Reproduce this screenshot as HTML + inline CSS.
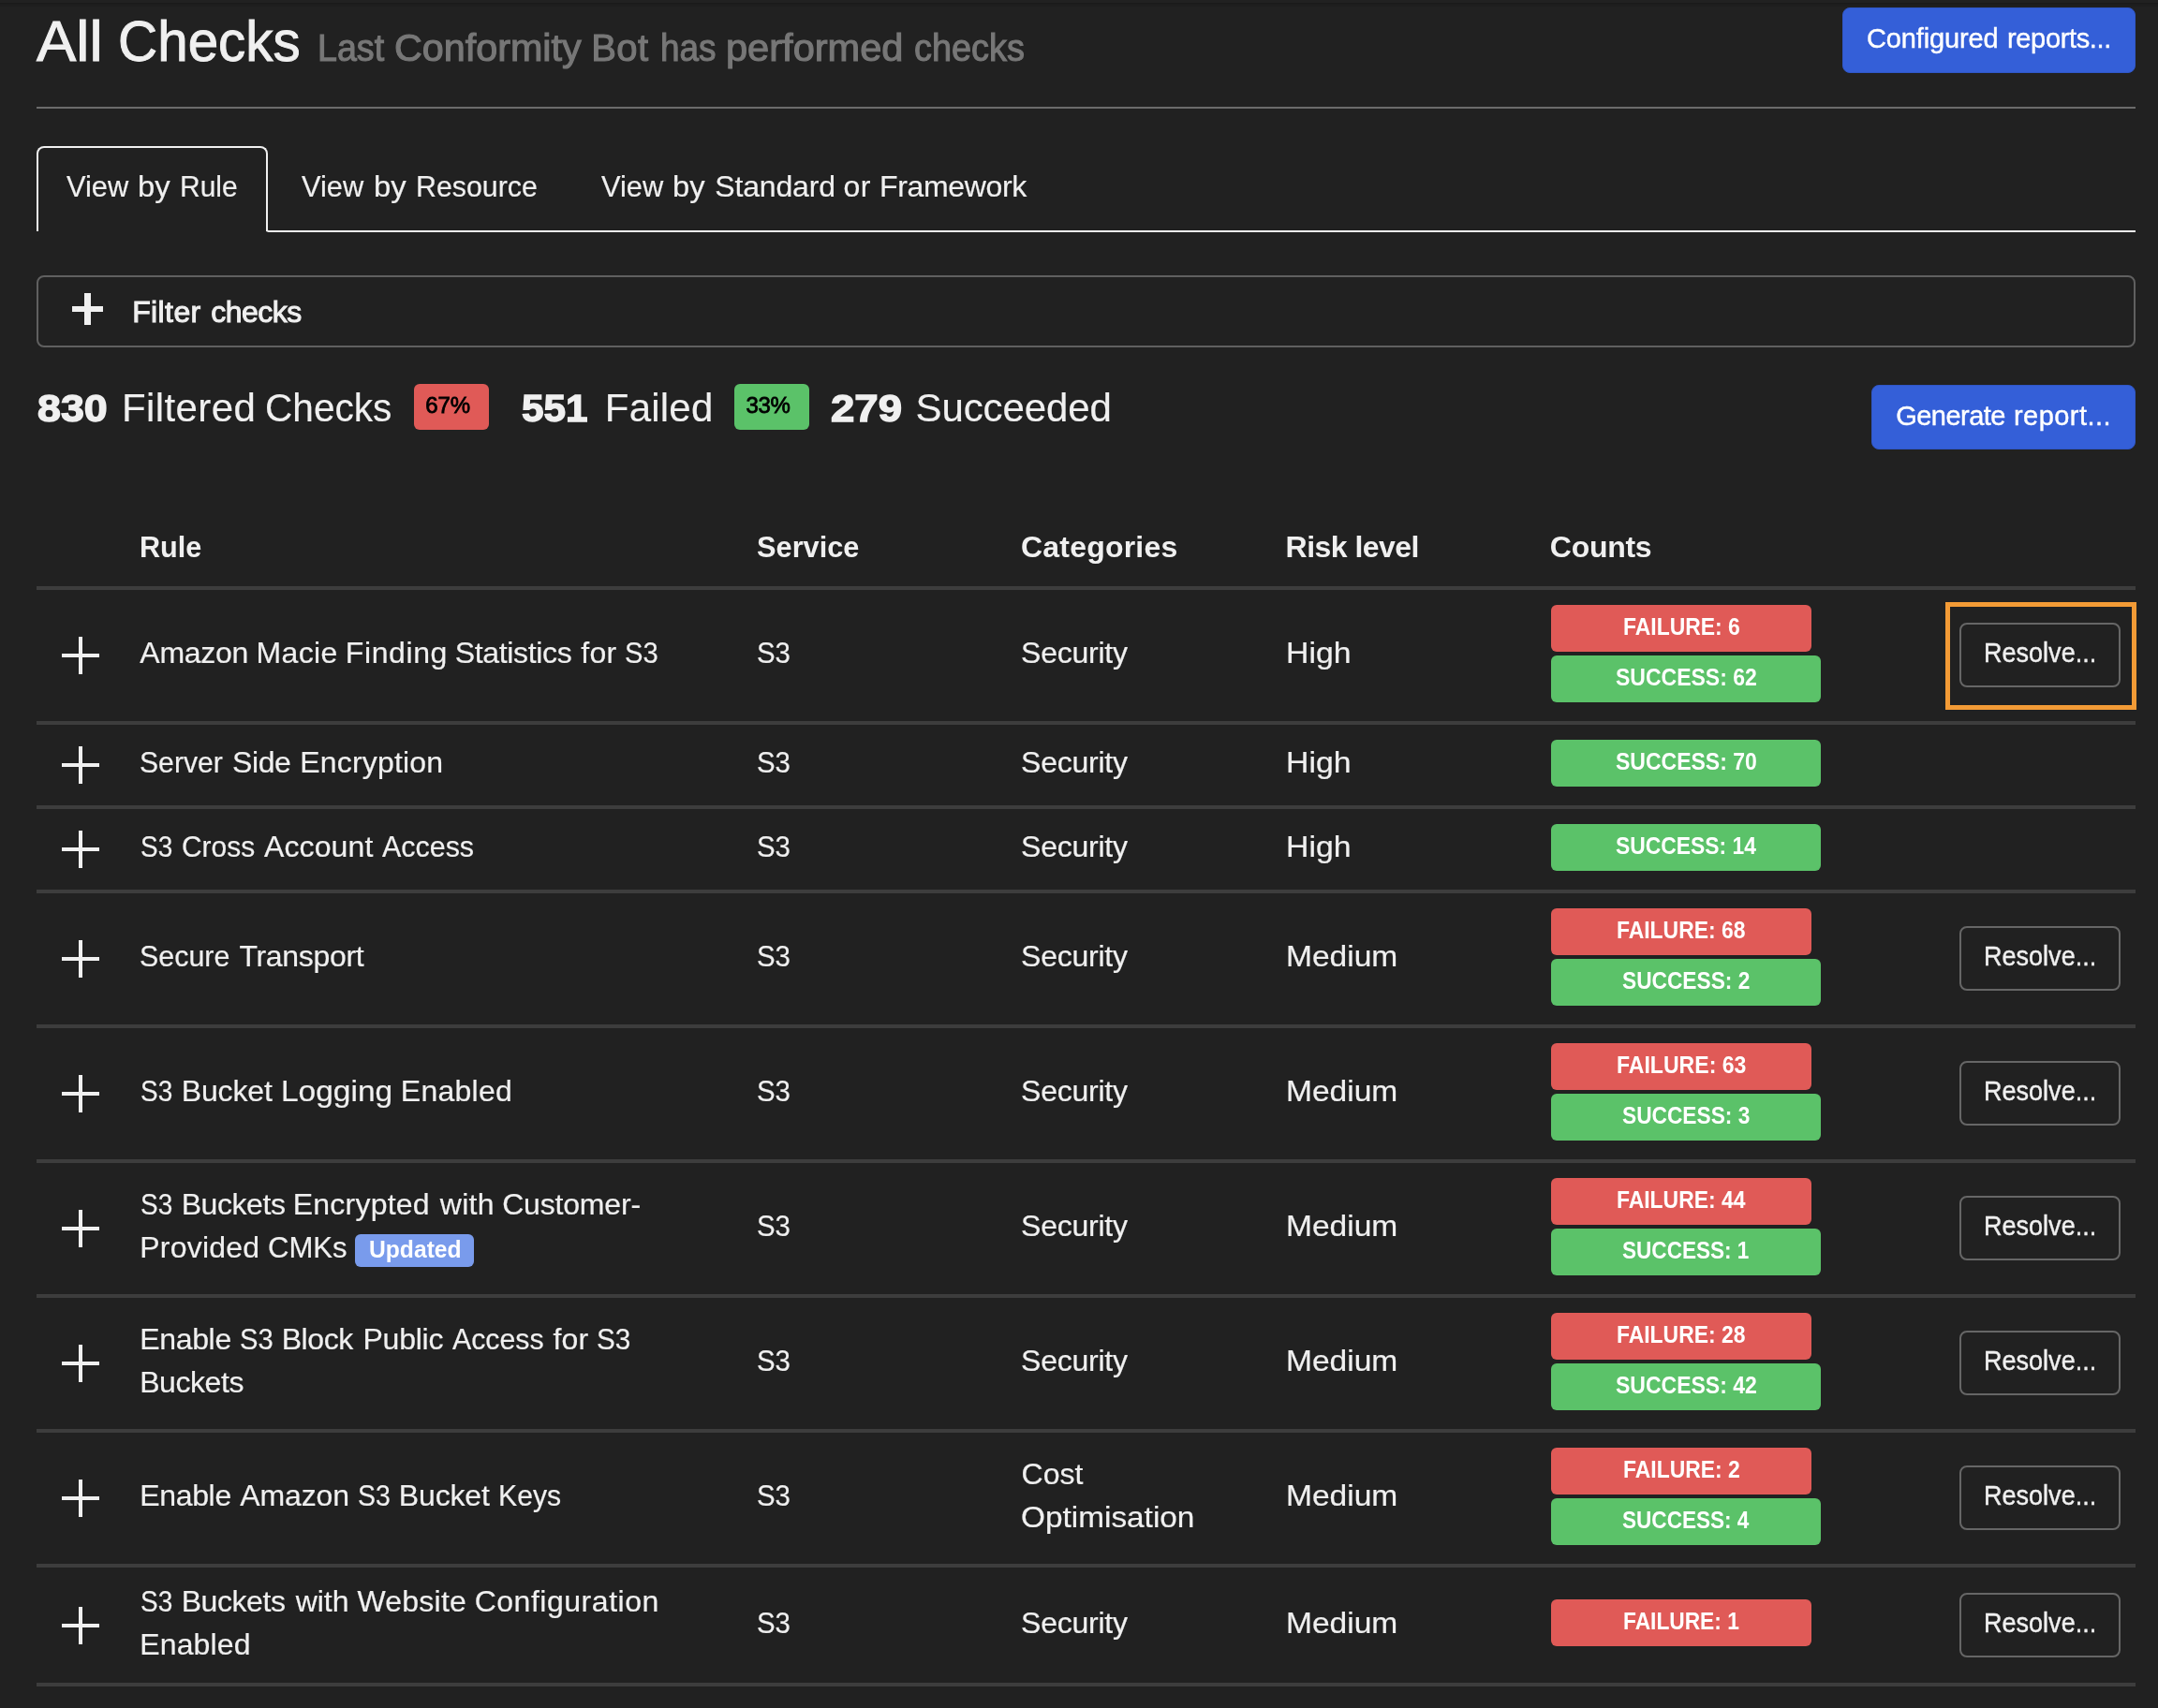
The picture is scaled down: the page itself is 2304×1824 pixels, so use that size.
<!DOCTYPE html>
<html><head><meta charset="utf-8"><title>All Checks</title>
<style>
html,body{margin:0;padding:0;background:#212121;}
body{width:2304px;height:1824px;position:relative;overflow:hidden;font-family:"Liberation Sans",sans-serif;}
#root{position:absolute;left:0;top:0;width:2304px;height:1824px;transform:translateZ(0);will-change:transform;}
#s>div{position:absolute;}
.t{position:absolute;white-space:nowrap;line-height:1;}
.t>span{display:inline-block;transform-origin:0 0;}
.btn{background:#345fd8;border-radius:8px;box-sizing:border-box;border:1px solid #3057c8;}
</style></head><body>
<div id="root">
<div id="s">
<div style="left:0;top:3px;width:2304px;height:1px;background:#1a1a1a"></div>
<div style="left:0;top:4px;width:2304px;height:1px;background:#1c1c1c"></div>
<div style="left:0;top:5px;width:2304px;height:1px;background:#1e1e1e"></div>
<div style="left:0;top:6px;width:2304px;height:1px;background:#1f1f1f"></div>
<div style="left:0;top:7px;width:2304px;height:1px;background:#202020"></div>
<div class="btn" style="left:1967px;top:8px;width:313px;height:70px"></div>
<div style="left:39px;top:114px;width:2241px;height:2px;background:#6b6b6b"></div>
<div style="left:284px;top:236px;width:1996px;height:12px;box-sizing:border-box;border-left:2px solid #f0f0f0;border-bottom:2px solid #f0f0f0;border-bottom-left-radius:3px"></div>
<div style="left:39px;top:156px;width:247px;height:91px;box-sizing:border-box;border:2px solid #f0f0f0;border-bottom:none;border-radius:8px 8px 0 0"></div>
<div style="left:39px;top:294px;width:2241px;height:77px;box-sizing:border-box;border:2px solid #606060;border-radius:8px"></div>
<div style="left:77px;top:326.5px;width:33px;height:6.5px;background:#f0f0f0"></div>
<div style="left:90px;top:313px;width:6.5px;height:33.5px;background:#f0f0f0"></div>
<div style="left:442px;top:410px;width:80px;height:49px;background:#e05a57;border-radius:6px"></div>
<div style="left:784px;top:410px;width:80px;height:49px;background:#5bc269;border-radius:6px"></div>
<div class="btn" style="left:1998px;top:411px;width:282px;height:69px"></div>
<div style="left:39px;top:626px;width:2241px;height:4px;background:#3d3d3d"></div>
<div style="left:39px;top:770px;width:2241px;height:4px;background:#3d3d3d"></div>
<div style="left:66px;top:698.0px;width:40px;height:4px;background:#f0f0f0"></div>
<div style="left:84px;top:680.0px;width:4px;height:40px;background:#f0f0f0"></div>
<div style="left:1656px;top:646px;width:278px;height:50px;background:#e05a57;border-radius:6px"></div>
<div style="left:1656px;top:700px;width:288px;height:50px;background:#5bc269;border-radius:6px"></div>
<div style="left:2092px;top:665px;width:172px;height:69px;box-sizing:border-box;border:2px solid #666;border-radius:8px"></div>
<div style="left:39px;top:860px;width:2241px;height:4px;background:#3d3d3d"></div>
<div style="left:66px;top:815.0px;width:40px;height:4px;background:#f0f0f0"></div>
<div style="left:84px;top:797.0px;width:4px;height:40px;background:#f0f0f0"></div>
<div style="left:1656px;top:790px;width:288px;height:50px;background:#5bc269;border-radius:6px"></div>
<div style="left:39px;top:950px;width:2241px;height:4px;background:#3d3d3d"></div>
<div style="left:66px;top:905.0px;width:40px;height:4px;background:#f0f0f0"></div>
<div style="left:84px;top:887.0px;width:4px;height:40px;background:#f0f0f0"></div>
<div style="left:1656px;top:880px;width:288px;height:50px;background:#5bc269;border-radius:6px"></div>
<div style="left:39px;top:1094px;width:2241px;height:4px;background:#3d3d3d"></div>
<div style="left:66px;top:1022.0px;width:40px;height:4px;background:#f0f0f0"></div>
<div style="left:84px;top:1004.0px;width:4px;height:40px;background:#f0f0f0"></div>
<div style="left:1656px;top:970px;width:278px;height:50px;background:#e05a57;border-radius:6px"></div>
<div style="left:1656px;top:1024px;width:288px;height:50px;background:#5bc269;border-radius:6px"></div>
<div style="left:2092px;top:989px;width:172px;height:69px;box-sizing:border-box;border:2px solid #666;border-radius:8px"></div>
<div style="left:39px;top:1238px;width:2241px;height:4px;background:#3d3d3d"></div>
<div style="left:66px;top:1166.0px;width:40px;height:4px;background:#f0f0f0"></div>
<div style="left:84px;top:1148.0px;width:4px;height:40px;background:#f0f0f0"></div>
<div style="left:1656px;top:1114px;width:278px;height:50px;background:#e05a57;border-radius:6px"></div>
<div style="left:1656px;top:1168px;width:288px;height:50px;background:#5bc269;border-radius:6px"></div>
<div style="left:2092px;top:1133px;width:172px;height:69px;box-sizing:border-box;border:2px solid #666;border-radius:8px"></div>
<div style="left:39px;top:1382px;width:2241px;height:4px;background:#3d3d3d"></div>
<div style="left:66px;top:1310.0px;width:40px;height:4px;background:#f0f0f0"></div>
<div style="left:84px;top:1292.0px;width:4px;height:40px;background:#f0f0f0"></div>
<div style="left:1656px;top:1258px;width:278px;height:50px;background:#e05a57;border-radius:6px"></div>
<div style="left:1656px;top:1312px;width:288px;height:50px;background:#5bc269;border-radius:6px"></div>
<div style="left:2092px;top:1277px;width:172px;height:69px;box-sizing:border-box;border:2px solid #666;border-radius:8px"></div>
<div style="left:39px;top:1526px;width:2241px;height:4px;background:#3d3d3d"></div>
<div style="left:66px;top:1454.0px;width:40px;height:4px;background:#f0f0f0"></div>
<div style="left:84px;top:1436.0px;width:4px;height:40px;background:#f0f0f0"></div>
<div style="left:1656px;top:1402px;width:278px;height:50px;background:#e05a57;border-radius:6px"></div>
<div style="left:1656px;top:1456px;width:288px;height:50px;background:#5bc269;border-radius:6px"></div>
<div style="left:2092px;top:1421px;width:172px;height:69px;box-sizing:border-box;border:2px solid #666;border-radius:8px"></div>
<div style="left:39px;top:1670px;width:2241px;height:4px;background:#3d3d3d"></div>
<div style="left:66px;top:1598.0px;width:40px;height:4px;background:#f0f0f0"></div>
<div style="left:84px;top:1580.0px;width:4px;height:40px;background:#f0f0f0"></div>
<div style="left:1656px;top:1546px;width:278px;height:50px;background:#e05a57;border-radius:6px"></div>
<div style="left:1656px;top:1600px;width:288px;height:50px;background:#5bc269;border-radius:6px"></div>
<div style="left:2092px;top:1565px;width:172px;height:69px;box-sizing:border-box;border:2px solid #666;border-radius:8px"></div>
<div style="left:39px;top:1797px;width:2241px;height:4px;background:#3d3d3d"></div>
<div style="left:66px;top:1733.5px;width:40px;height:4px;background:#f0f0f0"></div>
<div style="left:84px;top:1715.5px;width:4px;height:40px;background:#f0f0f0"></div>
<div style="left:1656px;top:1708px;width:278px;height:50px;background:#e05a57;border-radius:6px"></div>
<div style="left:2092px;top:1701px;width:172px;height:69px;box-sizing:border-box;border:2px solid #666;border-radius:8px"></div>
<div style="left:379px;top:1318px;width:127px;height:35px;background:#799bec;border-radius:6px"></div>
<div style="left:2077px;top:643px;width:204px;height:115px;box-sizing:border-box;border:5px solid #f39b36"></div>
</div>
<div class="t" style="left:39.41px;top:12.72px;font-size:62px;color:#f0f0f0;-webkit-text-stroke:1.0px #f0f0f0;"><span style="transform:scaleX(1.0238);">All</span> <span style="margin-left:0.91px;transform:scaleX(0.9416);">Checks</span></div>
<div class="t" style="left:338.70px;top:31.44px;font-size:40px;color:#777777;-webkit-text-stroke:1.1px #777777;"><span style="transform:scaleX(0.9403);">Last</span> <span style="margin-left:-4.61px;transform:scaleX(1.0323);">Conformity</span> <span style="margin-left:5.85px;letter-spacing:0.437px;">Bot</span> <span style="margin-left:0.85px;transform:scaleX(0.9218);">has</span> <span style="margin-left:-4.78px;transform:scaleX(1.0393);">performed</span> <span style="margin-left:7.16px;transform:scaleX(0.9467);">checks</span></div>
<div class="t" style="left:1993.00px;top:27.05px;font-size:29px;color:#ffffff;-webkit-text-stroke:0.4px #ffffff;"><span style="letter-spacing:-0.127px;">Configured</span> <span style="margin-left:1.34px;letter-spacing:-0.341px;">reports...</span></div>
<div class="t" style="left:70.70px;top:182.91px;font-size:32px;color:#f0f0f0;-webkit-text-stroke:0.2px #f0f0f0;"><span style="transform:scaleX(0.9618);">View</span> <span style="margin-left:-1.32px;transform:scaleX(1.0251);">by</span> <span style="margin-left:2.48px;transform:scaleX(0.9365);">Rule</span></div>
<div class="t" style="left:322.30px;top:182.91px;font-size:32px;color:#f0f0f0;-webkit-text-stroke:0.2px #f0f0f0;"><span style="transform:scaleX(0.9618);">View</span> <span style="margin-left:-1.32px;transform:scaleX(1.0251);">by</span> <span style="margin-left:2.46px;transform:scaleX(0.9475);">Resource</span></div>
<div class="t" style="left:642.10px;top:182.91px;font-size:32px;color:#f0f0f0;-webkit-text-stroke:0.2px #f0f0f0;"><span style="transform:scaleX(0.9618);">View</span> <span style="margin-left:-1.61px;transform:scaleX(1.0220);">by</span> <span style="margin-left:2.35px;letter-spacing:-0.140px;">Standard</span> <span style="margin-left:-0.25px;letter-spacing:0.303px;">or</span> <span style="margin-left:0.45px;letter-spacing:-0.352px;">Framework</span></div>
<div class="t" style="left:141.20px;top:316.81px;font-size:32px;color:#f0f0f0;-webkit-text-stroke:1.0px #f0f0f0;"><span style="letter-spacing:0.389px;">Filter</span> <span style="margin-left:1.66px;letter-spacing:-0.519px;">checks</span></div>
<div class="t" style="left:40.27px;top:415.89px;font-size:41px;color:#f0f0f0;font-weight:700;-webkit-text-stroke:1.4px #f0f0f0;"><span style="transform:scaleX(1.0911);">830</span></div>
<div class="t" style="left:129.97px;top:415.45px;font-size:42px;color:#f0f0f0;-webkit-text-stroke:0.15px #f0f0f0;"><span style="letter-spacing:0.394px;">Filtered</span> <span style="margin-left:-1.51px;transform:scaleX(0.9665);">Checks</span></div>
<div class="t" style="left:454.20px;top:420.68px;font-size:24px;color:#000;-webkit-text-stroke:0.8px #000;"><span style="letter-spacing:-0.098px;">67%</span></div>
<div class="t" style="left:556.59px;top:415.89px;font-size:41px;color:#f0f0f0;font-weight:700;-webkit-text-stroke:1.4px #f0f0f0;"><span style="transform:scaleX(1.0293);">551</span></div>
<div class="t" style="left:645.78px;top:415.45px;font-size:42px;color:#f0f0f0;-webkit-text-stroke:0.15px #f0f0f0;"><span style="letter-spacing:0.223px;">Failed</span></div>
<div class="t" style="left:796.60px;top:420.68px;font-size:24px;color:#000;-webkit-text-stroke:0.8px #000;"><span style="letter-spacing:-0.398px;">33%</span></div>
<div class="t" style="left:887.37px;top:415.89px;font-size:41px;color:#f0f0f0;font-weight:700;-webkit-text-stroke:1.4px #f0f0f0;"><span style="transform:scaleX(1.1117);">279</span></div>
<div class="t" style="left:977.58px;top:415.45px;font-size:42px;color:#f0f0f0;-webkit-text-stroke:0.15px #f0f0f0;"><span style="letter-spacing:-0.119px;">Succeeded</span></div>
<div class="t" style="left:2024.20px;top:429.65px;font-size:29px;color:#ffffff;-webkit-text-stroke:0.4px #ffffff;"><span style="letter-spacing:-0.526px;">Generate</span> <span style="margin-left:1.04px;letter-spacing:0.441px;">report...</span></div>
<div class="t" style="left:149.09px;top:568.11px;font-size:32px;color:#f0f0f0;font-weight:700;"><span style="transform:scaleX(0.9572);">Rule</span></div>
<div class="t" style="left:808.40px;top:568.11px;font-size:32px;color:#f0f0f0;font-weight:700;"><span style="transform:scaleX(0.9613);">Service</span></div>
<div class="t" style="left:1090.00px;top:568.11px;font-size:32px;color:#f0f0f0;font-weight:700;"><span style="letter-spacing:0.201px;">Categories</span></div>
<div class="t" style="left:1372.60px;top:568.11px;font-size:32px;color:#f0f0f0;font-weight:700;"><span style="letter-spacing:-0.530px;">Risk level</span></div>
<div class="t" style="left:1654.80px;top:568.11px;font-size:32px;color:#f0f0f0;font-weight:700;"><span style="letter-spacing:-0.281px;">Counts</span></div>
<div class="t" style="left:149.30px;top:681.41px;font-size:32px;color:#f0f0f0;-webkit-text-stroke:0.2px #f0f0f0;"><span style="letter-spacing:-0.259px;">Amazon</span> <span style="margin-left:-0.53px;letter-spacing:0.359px;">Macie</span> <span style="margin-left:-0.75px;letter-spacing:0.591px;">Finding</span> <span style="margin-left:-0.98px;letter-spacing:-0.348px;">Statistics</span> <span style="margin-left:0.96px;letter-spacing:0.256px;">for</span> <span style="margin-left:-0.62px;transform:scaleX(0.9109);">S3</span></div>
<div class="t" style="left:807.57px;top:681.41px;font-size:32px;color:#f0f0f0;-webkit-text-stroke:0.2px #f0f0f0;"><span style="transform:scaleX(0.9189);">S3</span></div>
<div class="t" style="left:1090.10px;top:681.41px;font-size:32px;color:#f0f0f0;-webkit-text-stroke:0.2px #f0f0f0;"><span style="letter-spacing:-0.256px;">Security</span></div>
<div class="t" style="left:1372.59px;top:681.41px;font-size:32px;color:#f0f0f0;-webkit-text-stroke:0.2px #f0f0f0;"><span style="transform:scaleX(1.0560);">High</span></div>
<div class="t" style="left:1732.88px;top:657.04px;font-size:25px;color:#fff;font-weight:700;"><span style="transform:scaleX(0.9164);">FAILURE: 6</span></div>
<div class="t" style="left:1725.00px;top:711.04px;font-size:25px;color:#fff;font-weight:700;"><span style="transform:scaleX(0.9200);">SUCCESS: 62</span></div>
<div class="t" style="left:2117.82px;top:682.95px;font-size:29px;color:#f0f0f0;-webkit-text-stroke:0.4px #f0f0f0;"><span style="transform:scaleX(0.9323);">Resolve...</span></div>
<div class="t" style="left:149.45px;top:798.41px;font-size:32px;color:#f0f0f0;-webkit-text-stroke:0.2px #f0f0f0;"><span style="transform:scaleX(0.9425);">Server</span> <span style="margin-left:-4.49px;letter-spacing:-0.450px;">Side</span> <span style="margin-left:0.96px;letter-spacing:0.190px;">Encryption</span></div>
<div class="t" style="left:807.57px;top:798.41px;font-size:32px;color:#f0f0f0;-webkit-text-stroke:0.2px #f0f0f0;"><span style="transform:scaleX(0.9189);">S3</span></div>
<div class="t" style="left:1090.10px;top:798.41px;font-size:32px;color:#f0f0f0;-webkit-text-stroke:0.2px #f0f0f0;"><span style="letter-spacing:-0.256px;">Security</span></div>
<div class="t" style="left:1372.59px;top:798.41px;font-size:32px;color:#f0f0f0;-webkit-text-stroke:0.2px #f0f0f0;"><span style="transform:scaleX(1.0560);">High</span></div>
<div class="t" style="left:1725.00px;top:801.04px;font-size:25px;color:#fff;font-weight:700;"><span style="transform:scaleX(0.9200);">SUCCESS: 70</span></div>
<div class="t" style="left:149.51px;top:888.41px;font-size:32px;color:#f0f0f0;-webkit-text-stroke:0.2px #f0f0f0;"><span style="transform:scaleX(0.8736);">S3</span> <span style="margin-left:-3.59px;transform:scaleX(0.9344);">Cross</span> <span style="margin-left:-4.51px;letter-spacing:0.128px;">Account</span> <span style="margin-left:1.09px;transform:scaleX(0.9507);">Access</span></div>
<div class="t" style="left:807.57px;top:888.41px;font-size:32px;color:#f0f0f0;-webkit-text-stroke:0.2px #f0f0f0;"><span style="transform:scaleX(0.9189);">S3</span></div>
<div class="t" style="left:1090.10px;top:888.41px;font-size:32px;color:#f0f0f0;-webkit-text-stroke:0.2px #f0f0f0;"><span style="letter-spacing:-0.256px;">Security</span></div>
<div class="t" style="left:1372.59px;top:888.41px;font-size:32px;color:#f0f0f0;-webkit-text-stroke:0.2px #f0f0f0;"><span style="transform:scaleX(1.0560);">High</span></div>
<div class="t" style="left:1725.00px;top:891.04px;font-size:25px;color:#fff;font-weight:700;"><span style="transform:scaleX(0.9144);">SUCCESS: 14</span></div>
<div class="t" style="left:149.45px;top:1005.41px;font-size:32px;color:#f0f0f0;-webkit-text-stroke:0.2px #f0f0f0;"><span style="transform:scaleX(0.9500);">Secure</span> <span style="margin-left:-4.23px;letter-spacing:-0.332px;">Transport</span></div>
<div class="t" style="left:807.57px;top:1005.41px;font-size:32px;color:#f0f0f0;-webkit-text-stroke:0.2px #f0f0f0;"><span style="transform:scaleX(0.9189);">S3</span></div>
<div class="t" style="left:1090.10px;top:1005.41px;font-size:32px;color:#f0f0f0;-webkit-text-stroke:0.2px #f0f0f0;"><span style="letter-spacing:-0.256px;">Security</span></div>
<div class="t" style="left:1372.61px;top:1005.41px;font-size:32px;color:#f0f0f0;-webkit-text-stroke:0.2px #f0f0f0;"><span style="transform:scaleX(1.0484);">Medium</span></div>
<div class="t" style="left:1726.08px;top:981.04px;font-size:25px;color:#fff;font-weight:700;"><span style="transform:scaleX(0.9160);">FAILURE: 68</span></div>
<div class="t" style="left:1732.25px;top:1035.04px;font-size:25px;color:#fff;font-weight:700;"><span style="transform:scaleX(0.9086);">SUCCESS: 2</span></div>
<div class="t" style="left:2117.82px;top:1006.95px;font-size:29px;color:#f0f0f0;-webkit-text-stroke:0.4px #f0f0f0;"><span style="transform:scaleX(0.9323);">Resolve...</span></div>
<div class="t" style="left:149.51px;top:1149.41px;font-size:32px;color:#f0f0f0;-webkit-text-stroke:0.2px #f0f0f0;"><span style="transform:scaleX(0.8736);">S3</span> <span style="margin-left:-3.84px;letter-spacing:-0.147px;">Bucket</span> <span style="margin-left:0.28px;transform:scaleX(1.0463);">Logging</span> <span style="margin-left:5.21px;letter-spacing:0.260px;">Enabled</span></div>
<div class="t" style="left:807.57px;top:1149.41px;font-size:32px;color:#f0f0f0;-webkit-text-stroke:0.2px #f0f0f0;"><span style="transform:scaleX(0.9189);">S3</span></div>
<div class="t" style="left:1090.10px;top:1149.41px;font-size:32px;color:#f0f0f0;-webkit-text-stroke:0.2px #f0f0f0;"><span style="letter-spacing:-0.256px;">Security</span></div>
<div class="t" style="left:1372.61px;top:1149.41px;font-size:32px;color:#f0f0f0;-webkit-text-stroke:0.2px #f0f0f0;"><span style="transform:scaleX(1.0484);">Medium</span></div>
<div class="t" style="left:1726.08px;top:1125.04px;font-size:25px;color:#fff;font-weight:700;"><span style="transform:scaleX(0.9222);">FAILURE: 63</span></div>
<div class="t" style="left:1732.25px;top:1179.04px;font-size:25px;color:#fff;font-weight:700;"><span style="transform:scaleX(0.9086);">SUCCESS: 3</span></div>
<div class="t" style="left:2117.82px;top:1150.95px;font-size:29px;color:#f0f0f0;-webkit-text-stroke:0.4px #f0f0f0;"><span style="transform:scaleX(0.9323);">Resolve...</span></div>
<div class="t" style="left:149.51px;top:1270.41px;font-size:32px;color:#f0f0f0;-webkit-text-stroke:0.2px #f0f0f0;"><span style="transform:scaleX(0.8736);">S3</span> <span style="margin-left:-3.84px;letter-spacing:-0.438px;">Buckets</span> <span style="margin-left:-0.65px;letter-spacing:0.227px;">Encrypted</span> <span style="margin-left:1.99px;letter-spacing:0.330px;">with</span> <span style="margin-left:-0.72px;letter-spacing:-0.175px;">Customer-</span></div>
<div class="t" style="left:149.20px;top:1316.41px;font-size:32px;color:#f0f0f0;-webkit-text-stroke:0.2px #f0f0f0;"><span style="letter-spacing:0.229px;">Provided</span> <span style="margin-left:-0.59px;transform:scaleX(0.9718);">CMKs</span></div>
<div class="t" style="left:393.81px;top:1322.14px;font-size:25px;color:#fff;font-weight:700;"><span style="transform:scaleX(0.9864);">Updated</span></div>
<div class="t" style="left:807.57px;top:1293.41px;font-size:32px;color:#f0f0f0;-webkit-text-stroke:0.2px #f0f0f0;"><span style="transform:scaleX(0.9189);">S3</span></div>
<div class="t" style="left:1090.10px;top:1293.41px;font-size:32px;color:#f0f0f0;-webkit-text-stroke:0.2px #f0f0f0;"><span style="letter-spacing:-0.256px;">Security</span></div>
<div class="t" style="left:1372.61px;top:1293.41px;font-size:32px;color:#f0f0f0;-webkit-text-stroke:0.2px #f0f0f0;"><span style="transform:scaleX(1.0484);">Medium</span></div>
<div class="t" style="left:1726.08px;top:1269.04px;font-size:25px;color:#fff;font-weight:700;"><span style="transform:scaleX(0.9160);">FAILURE: 44</span></div>
<div class="t" style="left:1732.25px;top:1323.04px;font-size:25px;color:#fff;font-weight:700;"><span style="transform:scaleX(0.9025);">SUCCESS: 1</span></div>
<div class="t" style="left:2117.82px;top:1294.95px;font-size:29px;color:#f0f0f0;-webkit-text-stroke:0.4px #f0f0f0;"><span style="transform:scaleX(0.9323);">Resolve...</span></div>
<div class="t" style="left:149.20px;top:1414.41px;font-size:32px;color:#f0f0f0;-webkit-text-stroke:0.2px #f0f0f0;"><span style="letter-spacing:-0.329px;">Enable</span> <span style="margin-left:0.22px;transform:scaleX(0.9109);">S3</span> <span style="margin-left:-3.31px;letter-spacing:-0.438px;">Block</span> <span style="margin-left:1.85px;letter-spacing:-0.231px;">Public</span> <span style="margin-left:1.24px;transform:scaleX(0.9459);">Access</span> <span style="margin-left:-4.93px;letter-spacing:0.106px;">for</span> <span style="margin-left:-0.29px;transform:scaleX(0.9269);">S3</span></div>
<div class="t" style="left:149.20px;top:1460.41px;font-size:32px;color:#f0f0f0;-webkit-text-stroke:0.2px #f0f0f0;"><span style="letter-spacing:-0.438px;">Buckets</span></div>
<div class="t" style="left:807.57px;top:1437.41px;font-size:32px;color:#f0f0f0;-webkit-text-stroke:0.2px #f0f0f0;"><span style="transform:scaleX(0.9189);">S3</span></div>
<div class="t" style="left:1090.10px;top:1437.41px;font-size:32px;color:#f0f0f0;-webkit-text-stroke:0.2px #f0f0f0;"><span style="letter-spacing:-0.256px;">Security</span></div>
<div class="t" style="left:1372.61px;top:1437.41px;font-size:32px;color:#f0f0f0;-webkit-text-stroke:0.2px #f0f0f0;"><span style="transform:scaleX(1.0484);">Medium</span></div>
<div class="t" style="left:1726.08px;top:1413.04px;font-size:25px;color:#fff;font-weight:700;"><span style="transform:scaleX(0.9160);">FAILURE: 28</span></div>
<div class="t" style="left:1725.00px;top:1467.04px;font-size:25px;color:#fff;font-weight:700;"><span style="transform:scaleX(0.9200);">SUCCESS: 42</span></div>
<div class="t" style="left:2117.82px;top:1438.95px;font-size:29px;color:#f0f0f0;-webkit-text-stroke:0.4px #f0f0f0;"><span style="transform:scaleX(0.9323);">Resolve...</span></div>
<div class="t" style="left:149.20px;top:1581.41px;font-size:32px;color:#f0f0f0;-webkit-text-stroke:0.2px #f0f0f0;"><span style="letter-spacing:-0.329px;">Enable</span> <span style="margin-left:0.54px;letter-spacing:-0.139px;">Amazon</span> <span style="margin-left:-0.15px;transform:scaleX(0.8896);">S3</span> <span style="margin-left:-3.83px;letter-spacing:-0.147px;">Bucket</span> <span style="margin-left:0.77px;transform:scaleX(0.9438);">Keys</span></div>
<div class="t" style="left:807.57px;top:1581.41px;font-size:32px;color:#f0f0f0;-webkit-text-stroke:0.2px #f0f0f0;"><span style="transform:scaleX(0.9189);">S3</span></div>
<div class="t" style="left:1090.50px;top:1558.41px;font-size:32px;color:#f0f0f0;-webkit-text-stroke:0.2px #f0f0f0;"><span style="letter-spacing:0.065px;">Cost</span></div>
<div class="t" style="left:1090.06px;top:1604.41px;font-size:32px;color:#f0f0f0;-webkit-text-stroke:0.2px #f0f0f0;"><span style="transform:scaleX(1.0425);">Optimisation</span></div>
<div class="t" style="left:1372.61px;top:1581.41px;font-size:32px;color:#f0f0f0;-webkit-text-stroke:0.2px #f0f0f0;"><span style="transform:scaleX(1.0484);">Medium</span></div>
<div class="t" style="left:1732.88px;top:1557.04px;font-size:25px;color:#fff;font-weight:700;"><span style="transform:scaleX(0.9164);">FAILURE: 2</span></div>
<div class="t" style="left:1732.25px;top:1611.04px;font-size:25px;color:#fff;font-weight:700;"><span style="transform:scaleX(0.9025);">SUCCESS: 4</span></div>
<div class="t" style="left:2117.82px;top:1582.95px;font-size:29px;color:#f0f0f0;-webkit-text-stroke:0.4px #f0f0f0;"><span style="transform:scaleX(0.9323);">Resolve...</span></div>
<div class="t" style="left:149.51px;top:1693.91px;font-size:32px;color:#f0f0f0;-webkit-text-stroke:0.2px #f0f0f0;"><span style="transform:scaleX(0.8736);">S3</span> <span style="margin-left:-3.84px;letter-spacing:-0.438px;">Buckets</span> <span style="margin-left:2.35px;letter-spacing:-0.036px;">with</span> <span style="margin-left:0.05px;letter-spacing:0.247px;">Website</span> <span style="margin-left:-0.43px;letter-spacing:0.529px;">Configuration</span></div>
<div class="t" style="left:149.20px;top:1739.91px;font-size:32px;color:#f0f0f0;-webkit-text-stroke:0.2px #f0f0f0;"><span style="letter-spacing:0.160px;">Enabled</span></div>
<div class="t" style="left:807.57px;top:1716.91px;font-size:32px;color:#f0f0f0;-webkit-text-stroke:0.2px #f0f0f0;"><span style="transform:scaleX(0.9189);">S3</span></div>
<div class="t" style="left:1090.10px;top:1716.91px;font-size:32px;color:#f0f0f0;-webkit-text-stroke:0.2px #f0f0f0;"><span style="letter-spacing:-0.256px;">Security</span></div>
<div class="t" style="left:1372.61px;top:1716.91px;font-size:32px;color:#f0f0f0;-webkit-text-stroke:0.2px #f0f0f0;"><span style="transform:scaleX(1.0484);">Medium</span></div>
<div class="t" style="left:1732.89px;top:1719.04px;font-size:25px;color:#fff;font-weight:700;"><span style="transform:scaleX(0.9097);">FAILURE: 1</span></div>
<div class="t" style="left:2117.82px;top:1718.95px;font-size:29px;color:#f0f0f0;-webkit-text-stroke:0.4px #f0f0f0;"><span style="transform:scaleX(0.9323);">Resolve...</span></div>
</div>
</body></html>
